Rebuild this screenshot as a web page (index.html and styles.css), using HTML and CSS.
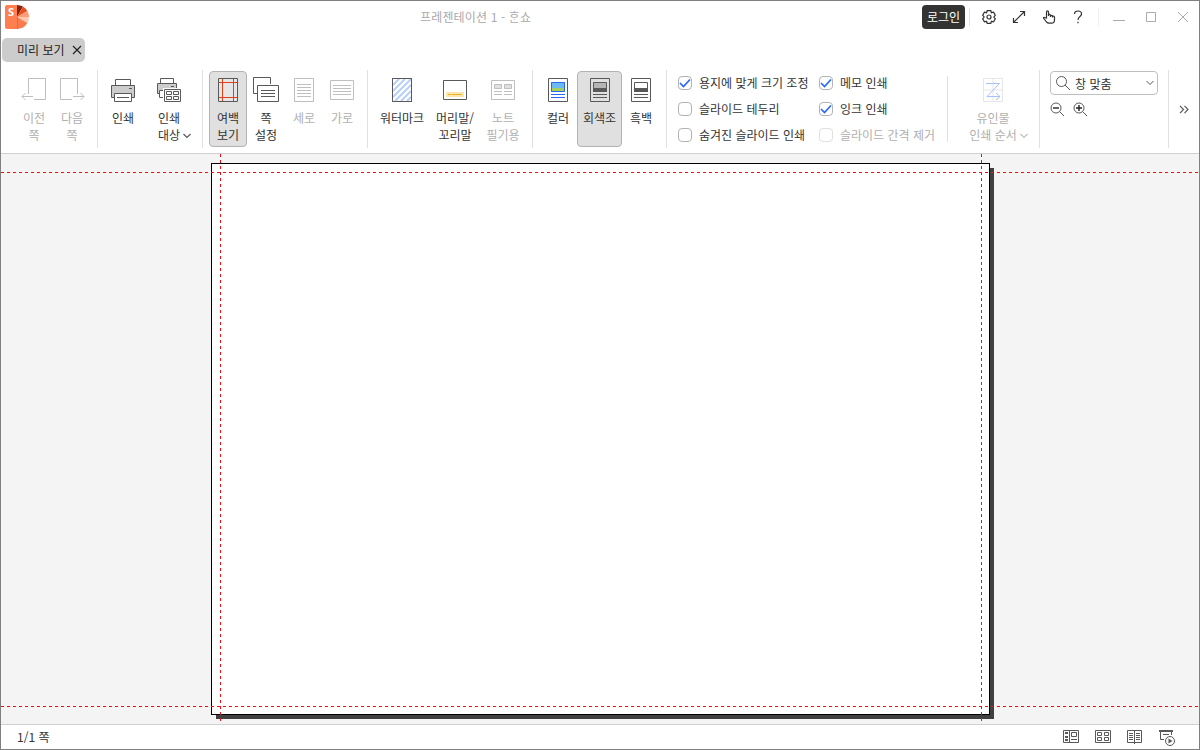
FILE: index.html
```
<!DOCTYPE html>
<html lang="ko">
	<head>
		<meta charset="UTF-8" />
		<meta name="viewport" content="width=device-width, initial-scale=1.0" />
		<title>프레젠테이션 1 - ᄒᆞᆫ쇼</title>
		<link rel="stylesheet" href="styles.css">
	</head>

	<body>
		<div class="window">
			<header class="titlebar">
				<svg class="logo" width="24" height="24" viewBox="0 0 24 24">
					<path d="M2 0H12V24H2Q0 24 0 22V2Q0 0 2 0Z" fill="#ff7f50" />
					<path d="M12 12V0A12 12 0 0 1 18 1.6Z" fill="#84260f" />
					<path d="M12 12L18 1.6A12 12 0 0 1 22.4 6Z" fill="#e9501f" />
					<path d="M12 12L22.4 6A12 12 0 0 1 24 12Z" fill="#ff9c74" />
					<path d="M12 12H24A12 12 0 0 1 22.4 18Z" fill="#ffc8b0" />
					<path d="M12 12L22.4 18A12 12 0 0 1 12 24Z" fill="#f97c4f" />
					<path d="M12.5 12V24" stroke="#e2683d" />
					<text x="3" y="11" class="logo-letter">S</text>
				</svg>
				<h1 class="title">프레젠테이션 1 - ᄒᆞᆫ쇼</h1>
				<div class="title-tools">
					<button class="login">로그인</button>
					<span class="tool-line"></span>
					<svg class="tool gear" width="16" height="16" viewBox="0 0 16 16">
						<path d="M6.2 1.7H9.8L10.4 3.7L12.6 3.2L14.3 6.2L12.9 8L14.3 9.8L12.6 12.8L10.4 12.3L9.8 14.3H6.2L5.6 12.3L3.4 12.8L1.7 9.8L3.1 8L1.7 6.2L3.4 3.2L5.6 3.7Z" />
						<circle cx="8" cy="8" r="2" />
					</svg>
					<svg class="tool expand" width="14" height="14" viewBox="0 0 14 14">
						<path d="M1.5 12.5L12.5 1.5M8 1.5H12.5V6M1.5 8V12.5H6" />
					</svg>
					<svg class="tool hand" width="14" height="14" viewBox="0 0 14 14">
						<path d="M4.5 8.5V2Q4.5 .8 5.5 .8Q6.5 .8 6.5 2V6M6.5 5Q8.5 3.5 8.5 6Q10.5 4.5 10.5 6.5Q12.5 5.5 12.5 7.5V10Q12.5 13.2 9.5 13.2H7Q5.5 13.2 4.5 12L1.5 8Q1.5 6.3 4.5 8.5M8.5 6V7M10.5 6.5V7.5" />
					</svg>
					<svg class="tool help" width="10" height="14" viewBox="0 0 10 14">
						<path d="M1.5 4Q1.5 1 5 1T8.5 4Q8.5 5.4 6.7 6.7Q5 8 5 10M5 11.7V13.3" />
					</svg>
					<span class="tool-line faint"></span>
					<svg class="tool pale minimize" width="12" height="12" viewBox="0 0 12 12"><path d="M0 9.5H12" /></svg>
					<svg class="tool pale maximize" width="10" height="10" viewBox="0 0 10 10"><path d="M.5 .5H9.5V9.5H.5Z" /></svg>
					<svg class="tool pale close" width="12" height="12" viewBox="0 0 12 12"><path d="M1 1L11 11M11 1L1 11" /></svg>
				</div>
			</header>

			<nav class="tabs">
				<div class="tab">
					<span>미리 보기</span>
					<svg width="10" height="10" viewBox="0 0 10 10"><path d="M1 1L9 9M9 1L1 9" /></svg>
				</div>
			</nav>

			<section class="ribbon">
				<div class="group group-move">
					<button class="item w38 disabled">
						<svg width="26" height="26" viewBox="0 0 26 26"><path d="M7.5 18V2.500H24.500V23.500H13M1 20.500H12M4.500 17L1 20.500L4.500 24" /></svg>
						<span>이전<br>쪽</span>
					</button>
					<button class="item w38 disabled">
						<svg width="26" height="26" viewBox="0 0 26 26"><path d="M18.500 18V2.500H1.500V23.500H13M14 20.500H25M21.500 17L25 20.500L21.500 24" /></svg>
						<span>다음<br>쪽</span>
					</button>
				</div>

				<div class="group group-print">
					<button class="item w46">
						<svg width="26" height="26" viewBox="0 0 26 26">
							<path d="M5.500 9.500V3.500H20.500V9.500" fill="#fff" />
							<path d="M1.500 9.500H24.500V21.500H1.500Z" fill="#ccc" />
							<path d="M4.500 17.500H21.500V25.500H4.500Z" fill="#fff" />
							<path d="M7 21.500H19M19 12.500H22" />
						</svg>
						<span>인쇄</span>
					</button>
					<button class="item w46">
						<svg width="26" height="26" viewBox="0 0 26 26">
							<path d="M4.500 7.500V2.500H17.500V7.500" fill="#fff" />
							<path d="M1.500 7.500H20.500V17.500H1.500Z" fill="#ccc" />
							<path d="M3.500 14.500H9V21.500H3.500Z" fill="#fff" />
							<path d="M7 12H26V26H7Z" class="white" />
							<path d="M8.500 13.500H24.500V25.500H8.500ZM10.500 15.500H15.500V18.500H10.500ZM17.500 15.500H22.500V18.500H17.500ZM10.500 20.500H15.500V23.500H10.500ZM17.500 20.500H22.500V23.500H17.500ZM15 10.500H18" fill="#fff" />
						</svg>
						<span>인쇄<br>대상</span>
						<svg class="caret" width="8" height="6" viewBox="0 0 8 6"><path d="M.5 1L4 4.500L7.500 1" /></svg>
					</button>
				</div>

				<div class="group group-page">
					<button class="item w38 active">
						<svg width="26" height="26" viewBox="0 0 26 26">
							<path d="M3.500 2.500H22.500V25.500H3.500Z" fill="#e6e6e6" />
							<path d="M7.500 3V25M18.500 3V25M4 6.500H22M4 21.500H22" class="red" />
						</svg>
						<span>여백<br>보기</span>
					</button>
					<button class="item w38">
						<svg width="26" height="26" viewBox="0 0 26 26">
							<path d="M4 17.500H.500V1.500H17.500V8" />
							<path d="M4.500 9.500H25.500V25.500H4.500Z" fill="#fff" />
							<path d="M8 14.500H22M8 17.500H22M8 20.500H22" />
						</svg>
						<span>쪽<br>설정</span>
					</button>
					<button class="item w38 disabled">
						<svg width="26" height="26" viewBox="0 0 26 26"><path d="M3.500 2.500H22.500V25.500H3.500ZM6 8.500H20M6 11.500H20M6 14.500H20M6 17.500H20M6 20.500H20" /></svg>
						<span>세로</span>
					</button>
					<button class="item w38 disabled">
						<svg width="26" height="26" viewBox="0 0 26 26"><path d="M1.500 4.500H24.500V23.500H1.500ZM4 9.500H22M4 12.500H22M4 15.500H22M4 18.500H22" /></svg>
						<span>가로</span>
					</button>
				</div>

				<div class="group group-marks">
					<button class="item w56">
						<svg width="26" height="26" viewBox="0 0 26 26">
							<path d="M3.500 2.500H22.500V25.500H3.500Z" fill="#fff" />
							<path d="M4 9L10 3M4 15L16 3M4 21L22 3M6 25L22 9M12 25L22 15M18 25L22 21" class="stripes" />
							<path d="M3.500 2.500H22.500V25.500H3.500Z" />
						</svg>
						<span>워터마크</span>
					</button>
					<button class="item w50">
						<svg width="26" height="26" viewBox="0 0 26 26">
							<path d="M1.500 4.500H24.500V23.500H1.500Z" fill="#fff" />
							<path d="M4 16H22V21H4Z" class="yellow" />
							<path d="M6 18.500H9M10 18.500H20" class="orange" />
						</svg>
						<span>머리말/<br>꼬리말</span>
					</button>
					<button class="item w46 disabled">
						<svg width="26" height="26" viewBox="0 0 26 26">
							<path d="M1.500 4.500H24.500V23.500H1.500ZM4 15.500H12M14 15.500H22M4 18.500H12M14 18.500H22" />
							<path d="M4.500 8.500H11.500V12.500H4.500ZM14.500 8.500H21.500V12.500H14.500Z" fill="#e0e0e0" />
						</svg>
						<span>노트<br>필기용</span>
					</button>
				</div>

				<div class="group group-color">
					<button class="item w38">
						<svg width="26" height="26" viewBox="0 0 26 26">
							<path d="M3.500 2.500H22.500V25.500H3.500Z" fill="#fff" />
							<path d="M6 6H20V13H6Z" class="sky" />
							<path d="M6 12H20V16H6Z" class="grass" />
							<path d="M6.500 6.500H19.500V15.500H6.500ZM6 18.500H20M6 21.500H20" class="blue" />
						</svg>
						<span>컬러</span>
					</button>
					<button class="item w45 active">
						<svg width="26" height="26" viewBox="0 0 26 26">
							<path d="M3.500 2.500H22.500V25.500H3.500Z" />
							<path d="M6.500 6.500H19.500V15.500H6.500Z" fill="#b5b5b5" />
							<path d="M6 12H20V16H6Z" class="dark" />
							<path d="M6 18.500H20M6 21.500H20" />
						</svg>
						<span>회색조</span>
					</button>
					<button class="item w38">
						<svg width="26" height="26" viewBox="0 0 26 26">
							<path d="M3.500 2.500H22.500V25.500H3.500ZM6.500 6.500H19.500V15.500H6.500Z" fill="#fff" />
							<path d="M6 12H20V16H6Z" class="dark" />
							<path d="M6 18.500H20M6 21.500H20" />
						</svg>
						<span>흑백</span>
					</button>
				</div>

				<div class="group group-options">
					<div class="checks">
						<label class="check checked"><i><svg width="12" height="10" viewBox="0 0 12 10"><path d="M1 5L4.500 8.500L11 1.500" /></svg></i>용지에 맞게 크기 조정</label>
						<label class="check checked"><i><svg width="12" height="10" viewBox="0 0 12 10"><path d="M1 5L4.500 8.500L11 1.500" /></svg></i>메모 인쇄</label>
						<label class="check"><i></i>슬라이드 테두리</label>
						<label class="check checked"><i><svg width="12" height="10" viewBox="0 0 12 10"><path d="M1 5L4.500 8.500L11 1.500" /></svg></i>잉크 인쇄</label>
						<label class="check"><i></i>숨겨진 슬라이드 인쇄</label>
						<label class="check off"><i></i>슬라이드 간격 제거</label>
					</div>
					<span class="short-line"></span>
					<button class="item w90 disabled">
						<svg width="26" height="26" viewBox="0 0 26 26">
							<path d="M3.500 2.500H22.500V25.500H3.500ZM13 3V25M4 14H22" class="grid" />
							<path d="M6 7.500H19.500L7 20.500H20M16 17L20 20.500L16 24" class="order" />
						</svg>
						<span>유인물<br>인쇄 순서</span>
						<svg class="caret" width="8" height="6" viewBox="0 0 8 6"><path d="M.5 1L4 4.500L7.500 1" /></svg>
					</button>
				</div>

				<div class="group group-zoom">
					<div class="select">
						<svg width="16" height="16" viewBox="0 0 16 16"><circle cx="6.500" cy="6.500" r="5" /><path d="M10 10L15 15" /></svg>
						<span>창 맞춤</span>
						<svg width="8" height="6" viewBox="0 0 8 6"><path d="M.5 1L4 4.500L7.500 1" /></svg>
					</div>
					<div class="zooms">
						<svg width="15" height="15" viewBox="0 0 15 15"><circle cx="6" cy="6" r="5" /><path d="M9.500 9.500L14 14" /><path d="M3 6H9" class="sign" /></svg>
						<svg width="15" height="15" viewBox="0 0 15 15"><circle cx="6" cy="6" r="5" /><path d="M9.500 9.500L14 14" /><path d="M3 6H9M6 3V9" class="sign" /></svg>
					</div>
				</div>

				<svg class="more" width="10" height="9" viewBox="0 0 10 9"><path d="M1 .8L4.500 4.500L1 8.200M5.500 .8L9 4.500L5.500 8.200" /></svg>
			</section>

			<main class="preview">
				<div class="paper"></div>
				<svg class="margins" width="1198" height="570" viewBox="0 0 1198 570">
					<path d="M0 18.500H1198M0 552.500H1198M219.500 0V567" />
					<path d="M980.500 0V567" />
				</svg>
			</main>

			<footer class="statusbar">
				<span class="pages">1/1 쪽</span>
				<div class="views">
					<svg width="16" height="14" viewBox="0 0 16 14"><path d="M.5 .5H15.500V12.500H.5ZM6.500 1V12M8.500 2.500H13.500V6.500H8.500ZM8 9.500H14" /><path d="M2 2H5V4H2ZM2 6H5V8H2ZM2 9H5V11H2Z" class="solid" /></svg>
					<svg width="16" height="14" viewBox="0 0 16 14"><path d="M.5 .5H15.500V12.500H.5ZM2.500 2.500H6.500V5.500H2.500ZM9.500 2.500H13.500V5.500H9.500ZM2.500 7.500H6.500V10.500H2.500ZM9.500 7.500H13.500V10.500H9.500Z" /></svg>
					<svg width="16" height="14" viewBox="0 0 16 14"><path d="M.5 .5H14.500V12.500H.5ZM7.500 .5V14M2 3.500H6M2 5.500H6M2 7.500H6M2 9.500H6M9 3.500H13M9 5.500H13M9 7.500H13M9 9.500H13" /></svg>
					<svg class="show" width="17" height="17" viewBox="0 0 17 17"><path d="M0 1H14" class="bar" /><path d="M1.500 1V9.500H5M12.500 1V5M4 4.500H10" /><circle cx="11" cy="11" r="4.500" fill="#fff" /><path d="M9.500 8.500L13.500 11L9.500 13.500Z" class="solid" /></svg>
				</div>
			</footer>
		</div>
	</body>
</html>
```
FILE: styles.css
```
* {
	margin: 0;
	padding: 0;
	box-sizing: border-box;
}

body {
	width: 1200px;
	height: 750px;
	overflow: hidden;
	font: 12px/17px "Noto Sans CJK KR", sans-serif;
	color: #333;
}

button {
	font: inherit;
	color: inherit;
	border: 0;
	background: none;
}

svg {
	display: block;
	flex: none;
	fill: none;
	stroke: #595959;
}

.window {
	display: flex;
	flex-direction: column;
	width: 1200px;
	height: 750px;
	border: 1px solid #808080;
	background: #fff;
}

/* title bar */
.titlebar {
	display: flex;
	align-items: center;
	height: 31px;
	padding-left: 4px;
}

.logo {
	stroke: none;
}

.logo-letter {
	font: bold 11px "Noto Sans", sans-serif;
	fill: #fff;
}

.title {
	width: 893px;
	padding-left: 391px;
	font-size: 12px;
	font-weight: normal;
	letter-spacing: .15px;
	color: #aaa;
}

.title-tools {
	display: flex;
	align-items: center;
}

.login {
	width: 43px;
	height: 24px;
	border-radius: 4px;
	background: #333;
	color: #fff;
}

.tool-line {
	width: 1px;
	height: 18px;
	margin: 0 11px 0 4px;
	background: #e0e0e0;
}

.tool-line.faint {
	margin: 0 14px 0 15px;
	background: #f0f0f0;
}

.tool {
	stroke: #333;
	stroke-width: 1.2;
}

.expand {
	margin-left: 15px;
}

.hand {
	margin-left: 16px;
}

.help {
	margin-left: 17px;
}

.pale {
	stroke: #aaa;
	stroke-width: 1;
}

.maximize {
	margin-left: 21px;
}

.close {
	margin-left: 21px;
}

/* tabs */
.tabs {
	height: 31px;
	padding: 6px 0 0 1px;
}

.tab {
	display: flex;
	align-items: center;
	gap: 7px;
	width: 83px;
	height: 24px;
	padding-left: 15px;
	border-radius: 5px;
	background: #ccc;
	color: #222;
}

.tab span {
	padding-bottom: 2px;
}

.tab svg {
	stroke: #222;
	stroke-width: 1.2;
}

/* ribbon */
.ribbon {
	display: flex;
	height: 91px;
	padding-top: 7px;
	border-bottom: 1px solid #d0d0d0;
}

.group {
	display: flex;
	height: 78px;
	padding-top: 1px;
	border-right: 1px solid #e0e0e0;
}

.group-move {
	width: 97px;
	padding-left: 14px;
}

.group-print {
	width: 105px;
	padding-left: 2px;
}

.group-page {
	width: 165px;
	padding-left: 6px;
}

.group-marks {
	width: 165px;
	padding-left: 6px;
}

.group-color {
	width: 134px;
	padding-left: 6px;
}

.group-options {
	width: 373px;
	padding-left: 11px;
}

.group-zoom {
	flex-direction: column;
	width: 129px;
	padding-left: 10px;
}

.item {
	display: flex;
	flex-wrap: wrap;
	align-content: flex-start;
	align-items: flex-end;
	justify-content: center;
	flex: none;
	height: 76px;
	padding-top: 5px;
	text-align: center;
}

.item > svg:first-child {
	margin: 0 5px 7px;
}

.item.active {
	padding-top: 4px;
	border: 1px solid #b3b3b3;
	border-radius: 4px;
	background: #e0e0e0;
}

.item.active > svg:first-child {
	margin: 0 0 7px;
}

.item.disabled {
	color: #b0b0b0;
}

.item.disabled svg {
	stroke: #bfbfbf;
}

/* the caret hangs outside the centred label */
.item .caret {
	margin: 0 -11px 4px 3px;
	stroke-width: 1.2;
}

.w38 { width: 38px; }
.w45 { width: 45px; }
.w46 { width: 46px; }
.w50 { width: 50px; }
.w56 { width: 56px; }
.w90 { width: 90px; }

.item.w90 > svg:first-child {
	margin: 0 25px 7px;
}

.white { fill: #fff; stroke: none; }
.red { stroke: #e0401c; }
.stripes { stroke: #b9cffb; stroke-width: 2; }
.yellow { fill: #fbe7ae; stroke: none; }
.orange { stroke: #efb023; }
.sky { fill: #6cb9f5; stroke: none; }
.grass { fill: #a5d05f; stroke: none; }
.blue { stroke: #2868f5; }
.dark { fill: #595959; stroke: none; }
.grid { stroke: #e6e6e6; }
.order { stroke: #a9c1fb; }

/* print options */
.checks {
	display: grid;
	grid-template-columns: 141px 128px;
	grid-auto-rows: 26px;
	white-space: nowrap;
}

.check {
	display: flex;
	align-items: center;
	gap: 7px;
	height: 22px;
}

.check i {
	display: flex;
	align-items: center;
	justify-content: center;
	width: 14px;
	height: 14px;
	margin-top: 2px;
	border: 1px solid #b3b3b3;
	border-radius: 4px;
}

.check svg {
	stroke: #2868f5;
	stroke-width: 1.7;
}

.check.off {
	color: #b0b0b0;
}

.check.off i {
	border-color: #e0e0e0;
}

.short-line {
	width: 1px;
	height: 66px;
	margin-top: 5px;
	background: #e0e0e0;
}

/* zoom */
.select {
	display: flex;
	align-items: center;
	width: 108px;
	height: 24px;
	padding: 0 3px 0 4px;
	border: 1px solid #bfbfbf;
	border-radius: 4px;
}

.select span {
	flex: 1;
	padding-left: 4px;
}

.zooms {
	display: flex;
	gap: 8px;
	padding-top: 7px;
}

.sign {
	stroke: #222;
	stroke-width: 1.4;
}

.more {
	margin: 35px 0 0 10px;
	stroke-width: 1.2;
}

/* preview */
.preview {
	position: relative;
	height: 570px;
	padding: 9px 0 0 210px;
	background: #f4f4f4;
}

.paper {
	width: 779px;
	height: 552px;
	border: 1px solid #000;
	background: #fff;
	box-shadow: 4.5px 4.5px 0 -.5px #404040;
}

.margins {
	position: absolute;
	top: 0;
	left: 0;
	stroke: #f01010;
	stroke-dasharray: 3 3;
}

/* status bar */
.statusbar {
	display: flex;
	align-items: center;
	justify-content: space-between;
	height: 25px;
	padding: 0 23px 0 16px;
	border-top: 1px solid #d0d0d0;
}

.pages {
	padding-bottom: 2px;
}

.views {
	display: flex;
	align-items: center;
	gap: 16px;
}

.show {
	margin-top: 2px;
}

.bar {
	stroke-width: 2;
}

.solid {
	fill: #595959;
	stroke: none;
}
```
